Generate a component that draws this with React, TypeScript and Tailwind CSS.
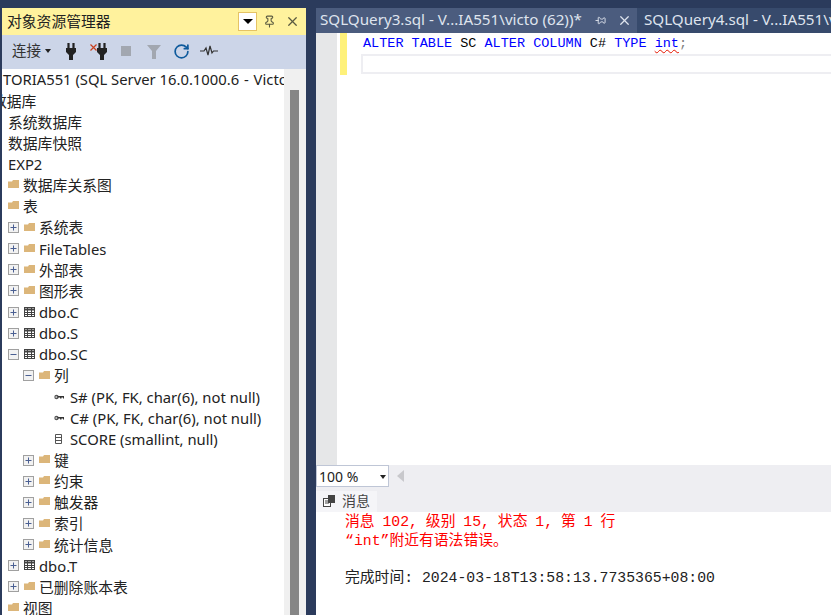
import React from 'react';
import { Pin, X, RotateCw } from 'lucide-react';

type Row = {
  indent: string;
  label: string;
  toggle?: 'plus' | 'minus';
  icon?: 'folder' | 'table' | 'key' | 'column';
};

const rows: Row[] = [
  { indent: 'pl-[6px]', label: '系统数据库' },
  { indent: 'pl-[6px]', label: '数据库快照' },
  { indent: 'pl-[6px]', label: 'EXP2' },
  { indent: 'pl-[6px]', label: '数据库关系图', icon: 'folder' },
  { indent: 'pl-[6px]', label: '表', icon: 'folder' },
  { indent: 'pl-[6px]', label: '系统表', toggle: 'plus', icon: 'folder' },
  { indent: 'pl-[6px]', label: 'FileTables', toggle: 'plus', icon: 'folder' },
  { indent: 'pl-[6px]', label: '外部表', toggle: 'plus', icon: 'folder' },
  { indent: 'pl-[6px]', label: '图形表', toggle: 'plus', icon: 'folder' },
  { indent: 'pl-[6px]', label: 'dbo.C', toggle: 'plus', icon: 'table' },
  { indent: 'pl-[6px]', label: 'dbo.S', toggle: 'plus', icon: 'table' },
  { indent: 'pl-[6px]', label: 'dbo.SC', toggle: 'minus', icon: 'table' },
  { indent: 'pl-[21px]', label: '列', toggle: 'minus', icon: 'folder' },
  { indent: 'pl-[52px]', label: 'S# (PK, FK, char(6), not null)', icon: 'key' },
  { indent: 'pl-[52px]', label: 'C# (PK, FK, char(6), not null)', icon: 'key' },
  { indent: 'pl-[52px]', label: 'SCORE (smallint, null)', icon: 'column' },
  { indent: 'pl-[21px]', label: '键', toggle: 'plus', icon: 'folder' },
  { indent: 'pl-[21px]', label: '约束', toggle: 'plus', icon: 'folder' },
  { indent: 'pl-[21px]', label: '触发器', toggle: 'plus', icon: 'folder' },
  { indent: 'pl-[21px]', label: '索引', toggle: 'plus', icon: 'folder' },
  { indent: 'pl-[21px]', label: '统计信息', toggle: 'plus', icon: 'folder' },
  { indent: 'pl-[6px]', label: 'dbo.T', toggle: 'plus', icon: 'table' },
  { indent: 'pl-[6px]', label: '已删除账本表', toggle: 'plus', icon: 'folder' },
  { indent: 'pl-[6px]', label: '视图', icon: 'folder' },
];

const Toggle = ({ kind }: { kind: 'plus' | 'minus' }) => (
  <svg width="11" height="11" viewBox="0 0 11 11" className="mr-[5px] shrink-0">
    <rect x="0.5" y="0.5" width="10" height="10" fill="#f2f2f2" stroke="#a0a0a0" />
    <path d={kind === 'plus' ? 'M2.5 5.5h6M5.5 2.500v6' : 'M2.5 5.5h6'} stroke="#4a5f92" />
  </svg>
);

const TreeIcon = ({ kind }: { kind: NonNullable<Row['icon']> }) => {
  if (kind === 'folder') {
    return (
      <svg width="11" height="10" viewBox="0 0 11 10" className="mr-[4px] mb-[2px] shrink-0">
        <path d="M0 2.5h4L5 1h6v8H0z" fill="#dcb67a" />
      </svg>
    );
  }
  if (kind === 'table') {
    return (
      <svg width="11" height="10" viewBox="0 0 11 10" className="mr-[4px] mb-[1px] shrink-0">
        <rect x="0.5" y="0.5" width="10" height="9" fill="#fff" stroke="#424242" />
        <path d="M0 2.5h11" stroke="#424242" strokeWidth="2" />
        <path d="M0 5.5h11M0 7.500h11M3.5 0v10M7.5 0v10" stroke="#424242" />
      </svg>
    );
  }
  if (kind === 'key') {
    return (
      <svg width="11" height="6" viewBox="0 0 11 6" className="mr-[5px] shrink-0">
        <circle cx="2.5" cy="3" r="2.2" fill="#555" />
        <circle cx="2.2" cy="3" r="0.8" fill="#fff" />
        <path d="M4 2h6v2.500H9v-1H7.500v1H6v-1H4z" fill="#333" />
      </svg>
    );
  }
  return (
    <svg width="11" height="10" viewBox="0 0 11 10" className="mr-[5px] shrink-0">
      <path d="M1.5 0.5h6v9h-6zM1.5 3.500h6M1.5 6.500h6" fill="#fff" stroke="#555" />
    </svg>
  );
};

const Plug = () => (
  <svg width="10" height="17" viewBox="0 0 10 17" className="shrink-0">
    <path d="M2.500 0v5M7.500 0v5" stroke="#222" strokeWidth="2.200" />
    <path d="M0 5h10v4L7 12v5H3v-5L0 9z" fill="#222" />
  </svg>
);

const ObjectExplorer = () => (
  <div className="flex h-full w-[306px] shrink-0 flex-col overflow-hidden pl-[2px]">
    <div className="flex h-[27px] shrink-0 items-center bg-[#fff29d] pl-[5px] pr-[6px] text-[14.800px] text-[#222]">
      <span className="flex-1">对象资源管理器</span>
      <span className="mr-[6px] flex h-[19px] w-[19px] items-center justify-center border border-[#e5c365] bg-white">
        <span className="h-0 w-0 border-x-[5px] border-t-[5px] border-x-transparent border-t-black" />
      </span>
      <Pin size={13} className="mr-[9px] text-[#5a5a40]" />
      <X size={15} className="text-[#5a5a40]" />
    </div>
    <div className="flex h-[32px] shrink-0 items-center bg-[#ccd5e8] pl-[10px] text-[#333]">
      <span className="text-[14.500px]">连接</span>
      <span className="ml-[4px] h-0 w-0 border-x-[3.500px] border-t-[4px] border-x-transparent border-t-[#222]" />
      <span className="ml-[15px]"><Plug /></span>
      <svg width="7" height="7" viewBox="0 0 7 7" className="ml-[14px] mb-[8px] shrink-0">
        <path d="M0.500 0.500l6 6M6.500 0.500l-6 6" stroke="#c8401e" strokeWidth="1.200" />
      </svg>
      <Plug />
      <span className="ml-[14px] h-[10px] w-[10px] bg-[#a2a7b0]" />
      <svg width="14" height="15" viewBox="0 0 14 15" className="ml-[16px] shrink-0">
        <path d="M0 1h14L9 7v8H5V7z" fill="#a2a7b0" />
      </svg>
      <RotateCw size={17} strokeWidth={2.400} className="ml-[12px] text-[#0e5a9c]" />
      <svg width="18" height="12" viewBox="0 0 18 12" className="ml-[10px] shrink-0">
        <path d="M0 6h4l2-3 2 7 2-9 2 7 1.500-2H18" fill="none" stroke="#333" strokeWidth="1.200" />
      </svg>
    </div>
    <div className="flex min-h-0 flex-1 border-t-[2px] border-[#ccd5e8]">
      <div className="min-w-0 flex-1 overflow-hidden bg-white text-[14.800px] text-[#222]">
        <div className="flex h-[21.150px] items-center whitespace-pre pl-[1px]">
          <span>TORIA551 (SQL Server 16.0.1000.6 </span>
          <span className="px-[1px]">-</span>
          <span> Victoria)</span>
        </div>
        <div className="flex h-[21.150px] items-center whitespace-nowrap -ml-[10px]">数据库</div>
        {rows.map((row) => (
          <div key={row.label} className={`flex h-[21.150px] items-center whitespace-nowrap ${row.indent}`}>
            {row.toggle && <Toggle kind={row.toggle} />}
            {row.icon && <TreeIcon kind={row.icon} />}
            <span>{row.label}</span>
          </div>
        ))}
      </div>
      <div className="w-[22px] shrink-0 bg-[#f0f0f0] pl-[6px] pt-[21px]">
        <div className="h-full w-[9px] bg-[#868686]" />
      </div>
    </div>
  </div>
);

const QueryPane = () => (
  <div className="ml-[10px] flex h-full min-w-0 flex-1 flex-col">
    <div className="flex h-[25px] shrink-0 items-center whitespace-nowrap text-[15.200px] text-[#dfe4ee]">
      <div className="flex h-full w-[321px] shrink-0 items-center bg-[#4b5c7e] pl-[4px]">
        <span className="flex-1 pb-[2px]">SQLQuery3.sql - V...IA551\victo (62))*</span>
        <Pin size={11} className="mr-[11px] rotate-90 text-[#dfe4ee]" />
        <X size={15} className="mr-[5px] text-[#dfe4ee]" />
      </div>
      <div className="flex h-full flex-1 items-center overflow-hidden bg-[#374a6c] pb-[2px] pl-[7px]">SQLQuery4.sql - V...IA551\victo (63))</div>
    </div>
    <div className="flex min-h-0 flex-1 bg-white">
      <div className="w-[21px] shrink-0 bg-[#e6e7e8]" />
      <div className="ml-[3px] h-[42px] w-[7px] shrink-0 bg-[#fef17a]" />
      <div className="min-w-0 flex-1 pl-[14px] pt-[1px] font-['Liberation_Mono',monospace] text-[13.500px] leading-[20px]">
        <div className="whitespace-pre pl-[2px] text-[#0000ff]">
          ALTER TABLE <span className="text-black">SC</span> ALTER COLUMN <span className="text-black">C#</span> TYPE{' '}
          <span className="underline decoration-wavy decoration-[#e51400] decoration-1 underline-offset-2">int</span>
          <span className="text-[#808080]">;</span>
        </div>
        <div className="h-[20px] border-2 border-r-0 border-[#eeeef2]" />
      </div>
    </div>
    <div className="flex h-[22px] shrink-0 items-center bg-[#eeeef2]">
      <div className="flex h-full w-[73px] items-center border border-[#bfc6d6] bg-white pl-[2px] pt-[1px] text-[14px] text-[#222]">
        <span className="flex-1">100 %</span>
        <span className="mr-[2px] h-0 w-0 border-x-[3.500px] border-t-[4px] border-x-transparent border-t-[#222]" />
      </div>
      <span className="ml-[8px] h-0 w-0 border-y-[6px] border-r-[7px] border-y-transparent border-r-[#c8c8cc]" />
    </div>
    <div className="flex h-[25px] shrink-0 items-end bg-[#eeeef2]">
      <div className="flex h-[21px] items-center bg-[#f5f5f8] pb-[2px] pl-[7px] pr-[7px] text-[14px] text-[#444]">
        <svg width="12" height="12" viewBox="0 0 12 12" className="mr-[7px]">
          <rect x="0.500" y="3.500" width="7" height="8" fill="#fff" stroke="#444" />
          <rect x="5" y="0" width="7" height="8" fill="#444" />
          <path d="M2 6h4M2 8h4" stroke="#444" />
        </svg>
        消息
      </div>
    </div>
    <div className="h-[103px] shrink-0 bg-white pl-[29px] pt-[1px] font-['Liberation_Mono','Noto_Sans_CJK_SC',monospace] text-[14.800px] leading-[18.500px] text-[#f00]">
      <div className="whitespace-pre [word-spacing:-1px]">消息 102, 级别 15, 状态 1, 第 1 行</div>
      <div className="whitespace-pre">“int”附近有语法错误。</div>
      <div className="h-[18.500px]" />
      <div className="whitespace-pre text-[#222]">完成时间: 2024-03-18T13:58:13.7735365+08:00</div>
    </div>
  </div>
);

export default function App() {
  return (
    <div className="flex h-[615px] w-[831px] overflow-hidden bg-[#2b3b5c] pt-[8px] font-['Noto_Sans','Noto_Sans_CJK_SC',sans-serif]">
      <ObjectExplorer />
      <QueryPane />
    </div>
  );
}
